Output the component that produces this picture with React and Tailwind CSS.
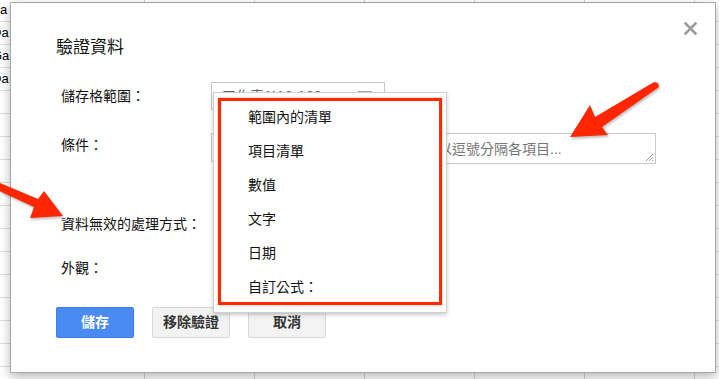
import React from 'react';

const font = "font-['Liberation_Sans','Noto_Sans_CJK_TC',sans-serif]";

const rowTexts = ['a', 'Da', 'Ga', 'Da'];
const menuItems = ['範圍內的清單', '項目清單', '數值', '文字', '日期', '自訂公式：'];

// Spreadsheet grid behind the modal
function Sheet() {
  const rows = Array.from({ length: 17 });
  const cols = Array.from({ length: 6 });
  return (
    <div className="mt-[-1px] flex flex-col">
      {rows.map((_, r) => (
        <div key={r} className="flex h-[23px] border-b border-[#dcdcdc]">
          <div className="w-[35px] shrink-0 overflow-hidden text-[13px] leading-[22px] text-black">
            {r < 4 && (
              <span className={r === 0 ? 'ml-0' : 'ml-[-8px]'}>{rowTexts[r]}</span>
            )}
          </div>
          {cols.map((__, c) => (
            <div key={c} className="w-[110px] shrink-0 border-r border-[#d4d4d4]" />
          ))}
        </div>
      ))}
    </div>
  );
}

function Button({ children, primary }) {
  return (
    <button
      className={
        primary
          ? 'flex h-[31px] w-[78px] items-center justify-center rounded-[2px] border border-[#3b7ee8] bg-[#4a8af4] text-[14px] font-bold text-white'
          : 'flex h-[31px] w-[78px] items-center justify-center rounded-[2px] border border-[#d9d9d9] bg-[#f3f3f3] text-[14px] font-bold text-[#333]'
      }
    >
      {children}
    </button>
  );
}

export default function App() {
  return (
    <div className={`relative h-[379px] w-[719px] overflow-hidden bg-white ${font}`}>
      <Sheet />

      {/* Dialog */}
      <div className="absolute left-[10px] top-[2px] h-[371px] w-[706px] border border-[#a8a8a8] bg-white shadow-[0_4px_10px_rgba(0,0,0,0.28)]">
        <button className="absolute right-[18px] top-[19px]">
          <svg width="13" height="13" viewBox="0 0 13 13">
            <path d="M1.5 1.5 L11.5 11.5 M11.5 1.5 L1.5 11.5" stroke="#9a9a9a" strokeWidth="2.6" strokeLinecap="square" />
          </svg>
        </button>

        <div className="flex flex-col pl-[45px] pt-[35px]">
          <div className="text-[17px] leading-[20px] text-[#111]">驗證資料</div>

          <div className="flex flex-col pl-[5px] text-[14px] leading-[20px] text-[#111]">
            <div className="mt-[24px] flex h-[28px] items-center">
              <div className="w-[150px]">儲存格範圍：</div>
              <div className="flex h-[28px] w-[174px] items-center justify-between border border-[#c6c6c6] pl-[10px] pr-[12px] text-[#666]">
                <span>工作表1!A2:A22</span>
                <span className="h-[10px] w-[14px] border border-[#aaa] bg-[#eee]" />
              </div>
            </div>

            <div className="mt-[23px] flex h-[31px] items-start">
              <div className="mt-[2px] w-[150px]">條件：</div>
              <div className="h-[29px] w-[174px] border border-[#c6c6c6]" />
              <div className="relative ml-[7px] flex h-[31px] w-[264px] items-center border border-[#c8c8c8] pl-[3px] text-[#777]">
                請輸入以逗號分隔各項目...
                <svg className="absolute bottom-[1px] right-[1px]" width="10" height="10" viewBox="0 0 10 10">
                  <path d="M9 2 L2 9 M9 5 L5 9 M9 8 L8 9" stroke="#999" strokeWidth="1" />
                </svg>
              </div>
            </div>

            <div className="mt-[50px] h-[20px]">資料無效的處理方式：</div>
            <div className="mt-[24px] h-[20px]">外觀：</div>
          </div>

          <div className="mt-[29px] flex gap-[18px]">
            <Button primary>儲存</Button>
            <Button>移除驗證</Button>
            <Button>取消</Button>
          </div>
        </div>
      </div>

      {/* Open dropdown menu */}
      <div className="absolute left-[213px] top-[92px] h-[221px] w-[234px] border border-[#cfcfcf] bg-white pl-[34px] pt-[7px] text-[14px] text-[#111] shadow-[0_2px_4px_rgba(0,0,0,0.2)]">
        {menuItems.map((item) => (
          <div key={item} className="flex h-[34px] items-center">
            {item}
          </div>
        ))}
      </div>

      {/* Red annotation box */}
      <div className="pointer-events-none absolute left-[218px] top-[98px] h-[207px] w-[224px] border-[3px] border-[#ff2a00] shadow-[0_0_2px_rgba(255,60,0,0.5)]" />

      {/* Red annotation arrows */}
      <svg
        className="pointer-events-none absolute left-0 top-0 drop-shadow-[1px_2px_1px_rgba(0,0,0,0.25)]"
        width="719"
        height="379"
        viewBox="0 0 719 379"
      >
        <polygon
          points="570,137 590,105 595,117 654,82 658,83 659,87 602,127 608,135"
          fill="#ff2600"
        />
        <polygon
          points="-5,181 38,199 44,191 63,216 30,218 34,207 -5,189"
          fill="#ff2600"
        />
      </svg>
    </div>
  );
}
